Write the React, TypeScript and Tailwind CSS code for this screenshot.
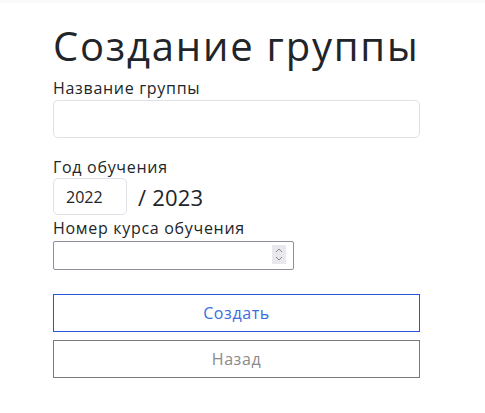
import React from "react";

export default function App() {
  const font = { fontFamily: "'Open Sans', 'Liberation Sans', sans-serif" };
  return (
    <div className="min-h-[413px] w-[485px] bg-white text-[#212529]" style={font}>
      <div className="h-[3px] bg-[#f8f9fa]" />
      <div className="ml-[53px] w-[367px] pt-[19px]">
        <h1 className="text-[40px] leading-[48px] font-normal tracking-[1.8px] text-[#212529]">
          Создание группы
        </h1>
        <label className="mt-[8px] block text-[16px] leading-[20px] tracking-[0.7px]">Название группы</label>
        <input
          className="mt-[2px] block h-[38px] w-[367px] rounded-[5px] border border-[#dee2e6] px-3 outline-none"
          type="text"
        />
        <label className="mt-[19px] block text-[16px] leading-[20px] tracking-[0.7px]">Год обучения</label>
        <div className="mt-[1px] flex items-center">
          <input
            className="block h-[37px] w-[74px] rounded-[5px] border border-[#dee2e6] pl-[12px] text-[16px] text-[#212529] outline-none"
            type="text"
            defaultValue="2022"
          />
          <span className="ml-[11px] text-[22px] leading-[28px] tracking-[0.2px]">/ 2023</span>
        </div>
        <label className="mt-[3px] block text-[16px] leading-[20px] tracking-[0.7px]">Номер курса обучения</label>
        <div className="relative mt-[3px] h-[29px] w-[241px]">
          <input
            className="block h-[29px] w-[241px] rounded-[2px] border border-[#8f8f9d] px-2 outline-none"
            type="text"
          />
          <div className="absolute left-[219px] top-[4px] flex h-[19px] w-[14px] flex-col items-center justify-center gap-[3px] bg-[#e9e9ed]">
            <svg width="8" height="5" viewBox="0 0 8 5">
              <path d="M1 4 L4 1 L7 4" fill="none" stroke="#8a8a95" strokeWidth="1" />
            </svg>
            <svg width="8" height="5" viewBox="0 0 8 5">
              <path d="M1 1 L4 4 L7 1" fill="none" stroke="#8a8a95" strokeWidth="1" />
            </svg>
          </div>
        </div>
        <button className="mt-[24px] block h-[38px] w-[367px] border border-[#2157d6] bg-white text-[16px] text-[#3a6ce2] tracking-[0.6px]">
          Создать
        </button>
        <button className="mt-[8px] block h-[38px] w-[367px] border border-[#7a7a7a] bg-white text-[16px] text-[#8a8a8a] tracking-[0.6px]">
          Назад
        </button>
      </div>
    </div>
  );
}
